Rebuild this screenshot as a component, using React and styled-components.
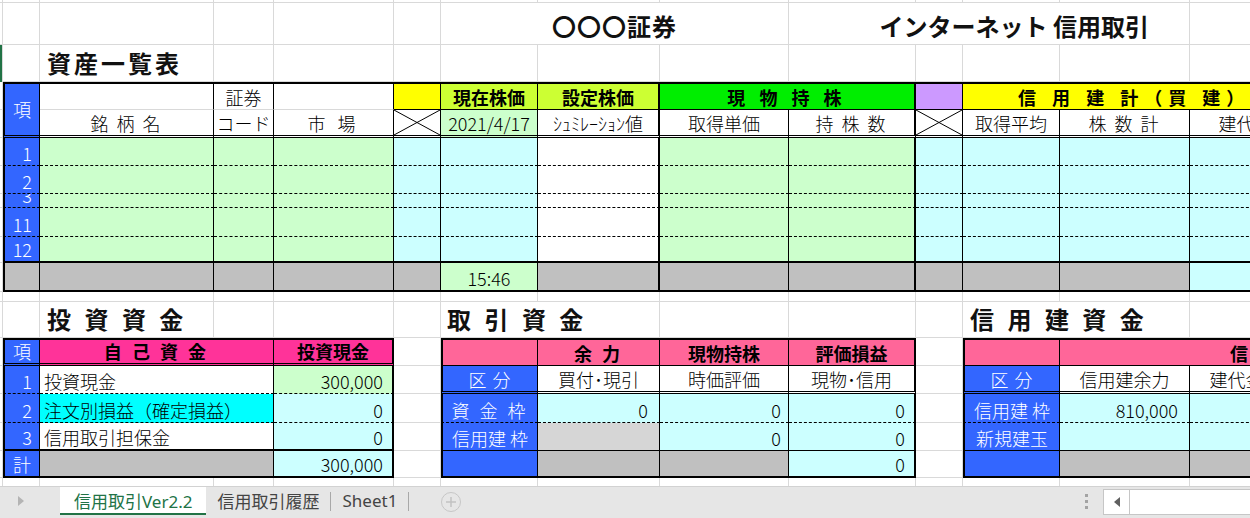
import React from "react";
import styled, { createGlobalStyle } from "styled-components";

const GlobalStyle = createGlobalStyle`
  html, body {
    margin: 0;
    padding: 0;
    background: #fff;
    overflow: hidden;
  }
  body {
    font-family: "Noto Sans CJK JP", "Noto Sans", sans-serif;
  }
`;

// excel fill colours
const BLUE = "#3366ff";
const YELLOW = "#ffff00";
const LIME = "#ccff33";
const GREEN = "#00ee00";
const PURPLE = "#cc99ff";
const LGREEN = "#ccffcc";
const CYAN = "#ccffff";
const AQUA = "#00ffff";
const GRAY = "#c0c0c0";
const LGRAY = "#d6d6d6";
const PINK = "#ff3399";
const ROSE = "#ff6699";
const W = "#fff";

const THIN = "1px solid #000";
const THICK = "2px solid #000";
const DASH = "1px dashed #000";
const DBL = "3px double #000";
const GRID = "1px solid #d9d9d9";

const COLS = [3, 37, 174, 60, 120, 47, 97, 122, 129, 127, 47, 97, 130, 130];
const ROWS = [3, 42, 37, 28, 28, 28, 28, 14, 29, 26, 29, 10, 36, 28, 28, 29, 28, 27, 20];

const JUSTIFY = { left: "flex-start", center: "center", right: "flex-end" };

const Page = styled.div`
  width: 1250px;
  height: 518px;
  display: flex;
  flex-direction: column;
  overflow: hidden;
`;

const Sheet = styled.div`
  flex: 1;
  overflow: hidden;
`;

const Grid = styled.div`
  display: grid;
  width: max-content;
  grid-template-columns: ${COLS.map((w) => w + "px").join(" ")};
  grid-template-rows: ${ROWS.map((h) => h + "px").join(" ")};
`;

const GridCell = styled.div`
  grid-row: ${(p) => p.$r + 1};
  grid-column: ${(p) => p.$c + 1};
  box-sizing: border-box;
  border-right: ${GRID};
  border-bottom: ${GRID};
`;

const SelBar = styled.div`
  grid-row: 3;
  grid-column: 1;
  width: 2px;
  background: #217346;
`;

const Cell = styled.div`
  grid-row: ${(p) => p.$r + 1} / span ${(p) => p.$rs || 1};
  grid-column: ${(p) => p.$c + 1} / span ${(p) => p.$cs || 1};
  box-sizing: border-box;
  min-width: 0;
  min-height: 0;
  display: flex;
  align-items: ${(p) => p.$va || "flex-end"};
  justify-content: ${(p) => JUSTIFY[p.$al || "center"]};
  padding: 0 ${(p) => p.$pr ?? 3}px ${(p) => p.$pb ?? 1}px ${(p) => p.$pl ?? 3}px;
  background: ${(p) => p.$bg || "#fff"};
  color: ${(p) => p.$fg || "#000"};
  font-size: 18px;
  line-height: 22px;
  font-weight: ${(p) => (p.$bold ? 700 : 300)};
  letter-spacing: ${(p) => p.$ls || 0}px;
  white-space: nowrap;
  overflow: hidden;
  border-top: ${(p) => p.$bt || "none"};
  border-right: ${(p) => p.$br || "none"};
  border-bottom: ${(p) => p.$bb || "none"};
  border-left: ${(p) => p.$bl || "none"};
`;

const TitleCell = styled(Cell)`
  font-size: 24px;
  line-height: 30px;
  font-weight: 700;
  color: #111;
`;

const CrossSvg = styled.svg`
  display: block;
  flex: 1 1 auto;
  width: 100%;
  height: 100%;
`;

const Cross = () => (
  <CrossSvg viewBox="0 0 100 100" preserveAspectRatio="none">
    <line x1="0" y1="0" x2="100" y2="100" stroke="#000" strokeWidth="1" vectorEffect="non-scaling-stroke" />
    <line x1="0" y1="100" x2="100" y2="0" stroke="#000" strokeWidth="1" vectorEffect="non-scaling-stroke" />
  </CrossSvg>
);

const renderCell = (d, key) => (
  <Cell
    key={key}
    $r={d.r}
    $c={d.c}
    $rs={d.rs}
    $cs={d.cs}
    $bg={d.bg}
    $fg={d.fg}
    $bold={d.b}
    $al={d.al}
    $va={d.x ? "stretch" : d.va}
    $pl={d.x ? 0 : d.pl}
    $pr={d.x ? 0 : d.pr}
    $pb={d.x ? 0 : d.pb}
    $ls={d.ls}
    $bt={d.bt}
    $br={d.br}
    $bb={d.bb}
    $bl={d.bl}
  >
    {d.x ? <Cross /> : d.t}
  </Cell>
);

// --- titles
const titles = [
  { r: 1, c: 6, cs: 3, t: "〇〇〇証券", ls: 1 },
  { r: 1, c: 9, cs: 4, t: "インターネット 信用取引", al: "right", pr: 40 },
  { r: 2, c: 2, t: "資産一覧表", al: "left", pl: 7, ls: 3 },
  { r: 12, c: 2, t: "投 資 資 金", al: "left", pl: 7, ls: 4 },
  { r: 12, c: 6, cs: 2, t: "取 引 資 金", al: "left", pl: 6, ls: 4 },
  { r: 12, c: 11, cs: 2, t: "信 用 建 資 金", al: "left", pl: 7, ls: 4 },
];

// --- 資産一覧表 header
const assetHeader = [
  { r: 3, c: 1, rs: 2, t: "項", bg: BLUE, fg: W, va: "center", bt: THICK, bl: THICK, br: THIN, bb: DBL },
  { r: 3, c: 2, bt: THICK, br: THIN, bb: GRID },
  { r: 4, c: 2, t: "銘 柄 名", br: THIN, bb: DBL, ls: 2 },
  { r: 3, c: 3, t: "証券", bt: THICK, br: THIN, bb: GRID },
  { r: 4, c: 3, t: "コード", br: THIN, bb: DBL },
  { r: 3, c: 4, bt: THICK, br: THIN, bb: GRID },
  { r: 4, c: 4, t: "市 場", br: THIN, bb: DBL, ls: 4 },
  { r: 3, c: 5, bg: YELLOW, bt: THICK, br: THIN, bb: THIN },
  { r: 4, c: 5, x: true, br: THIN, bb: DBL },
  { r: 3, c: 6, t: "現在株価", b: true, bg: LIME, bt: THICK, br: THIN, bb: THIN },
  { r: 4, c: 6, t: "2021/4/17", bg: LGREEN, br: THIN, bb: DBL, pl: 1, pr: 1 },
  { r: 3, c: 7, t: "設定株価", b: true, bg: LIME, bt: THICK, br: THICK, bb: THIN },
  { r: 4, c: 7, t: "ｼｭﾐﾚｰｼｮﾝ値", br: THICK, bb: DBL },
  { r: 3, c: 8, cs: 2, t: "現 物 持 株", b: true, bg: GREEN, bt: THICK, br: THICK, bb: THIN, ls: 5 },
  { r: 4, c: 8, t: "取得単価", br: THIN, bb: DBL },
  { r: 4, c: 9, t: "持 株 数", br: THICK, bb: DBL, ls: 2 },
  { r: 3, c: 10, bg: PURPLE, bt: THICK, br: THIN, bb: THIN },
  { r: 4, c: 10, x: true, br: THIN, bb: DBL },
  { r: 3, c: 11, cs: 3, t: "信 用 建 計（買 建）", b: true, bg: YELLOW, bt: THICK, bb: THIN, al: "left", pl: 55, ls: 6 },
  { r: 4, c: 11, t: "取得平均", br: THIN, bb: DBL },
  { r: 4, c: 12, t: "株 数 計", br: THIN, bb: DBL, ls: 2 },
  { r: 4, c: 13, t: "建代金計", br: THIN, bb: DBL },
];

const assetCols = [
  { c: 1, bg: BLUE, br: THIN, bl: THICK },
  { c: 2, bg: LGREEN, br: THIN },
  { c: 3, bg: LGREEN, br: THIN },
  { c: 4, bg: LGREEN, br: THIN },
  { c: 5, bg: CYAN, br: THIN },
  { c: 6, bg: CYAN, br: THIN },
  { c: 7, bg: W, br: THICK },
  { c: 8, bg: LGREEN, br: THIN },
  { c: 9, bg: LGREEN, br: THICK },
  { c: 10, bg: CYAN, br: THIN },
  { c: 11, bg: CYAN, br: THIN },
  { c: 12, bg: CYAN, br: THIN },
  { c: 13, bg: CYAN, br: THIN },
];

const assetRows = [
  { r: 5, n: "1", bb: DASH },
  { r: 6, n: "2", bb: DASH },
  { r: 7, n: "3", bb: DASH },
  { r: 8, n: "11", bb: DASH },
  { r: 9, n: "12", bb: THICK },
];

const assetBody = [
  ...assetRows.flatMap((row) =>
    assetCols.map((col) => ({
      r: row.r,
      c: col.c,
      bg: col.bg,
      br: col.br,
      bl: col.bl,
      bb: row.bb,
      ...(col.c === 1 ? { t: row.n, fg: W, al: "right", pr: 7 } : {}),
    }))
  ),
  ...assetCols.map((col) => ({
    r: 10,
    c: col.c,
    br: col.br,
    bl: col.bl,
    bb: THICK,
    bg: col.c === 6 ? LGREEN : col.c === 13 ? CYAN : GRAY,
    t: col.c === 6 ? "15:46" : undefined,
  })),
];

// --- 投資資金
const fundRows = [
  { r: 14, n: "1", label: "投資現金", lbg: W, v: "300,000", vbg: LGREEN, bb: DASH },
  { r: 15, n: "2", label: "注文別損益（確定損益）", lbg: AQUA, v: "0", vbg: CYAN, bb: DASH },
  { r: 16, n: "3", label: "信用取引担保金", lbg: W, v: "0", vbg: CYAN, bb: THICK },
];

const fund = [
  { r: 13, c: 1, t: "項", bg: BLUE, fg: W, bt: THICK, bl: THICK, br: THIN, bb: DBL },
  { r: 13, c: 2, cs: 2, t: "自 己 資 金", b: true, bg: PINK, bt: THICK, br: THIN, bb: DBL, ls: 3 },
  { r: 13, c: 4, t: "投資現金", b: true, bg: PINK, bt: THICK, br: THICK, bb: DBL },
  ...fundRows.flatMap((row) => [
    { r: row.r, c: 1, t: row.n, bg: BLUE, fg: W, al: "right", pr: 7, bl: THICK, br: THIN, bb: row.bb },
    { r: row.r, c: 2, cs: 2, t: row.label, bg: row.lbg, al: "left", pl: 4, br: THIN, bb: row.bb },
    { r: row.r, c: 4, t: row.v, bg: row.vbg, al: "right", pr: 9, br: THICK, bb: row.bb },
  ]),
  { r: 17, c: 1, t: "計", bg: BLUE, fg: W, bl: THICK, br: THIN, bb: THICK },
  { r: 17, c: 2, cs: 2, bg: GRAY, br: THIN, bb: THICK },
  { r: 17, c: 4, t: "300,000", bg: CYAN, al: "right", pr: 9, br: THICK, bb: THICK },
];

// --- 取引資金
const trade = [
  { r: 13, c: 6, bg: ROSE, bt: THICK, bl: THICK, br: THIN, bb: THIN },
  { r: 13, c: 7, t: "余 力", b: true, bg: ROSE, bt: THICK, br: THIN, bb: THIN, ls: 3 },
  { r: 13, c: 8, t: "現物持株", b: true, bg: ROSE, bt: THICK, br: THIN, bb: THIN },
  { r: 13, c: 9, t: "評価損益", b: true, bg: ROSE, bt: THICK, br: THICK, bb: THIN },
  { r: 14, c: 6, t: "区 分", bg: BLUE, fg: W, bl: THICK, br: THIN, bb: DBL, ls: 1 },
  { r: 14, c: 7, t: "買付･現引", br: THIN, bb: DBL },
  { r: 14, c: 8, t: "時価評価", br: THIN, bb: DBL },
  { r: 14, c: 9, t: "現物･信用", br: THICK, bb: DBL },
  { r: 15, c: 6, t: "資 金 枠", bg: BLUE, fg: W, bl: THICK, br: THIN, bb: DASH, ls: 3 },
  { r: 15, c: 7, t: "0", bg: CYAN, al: "right", pr: 11, br: THIN, bb: DASH },
  { r: 15, c: 8, t: "0", bg: CYAN, al: "right", pr: 7, br: THIN, bb: DASH },
  { r: 15, c: 9, t: "0", bg: CYAN, al: "right", pr: 9, br: THICK, bb: DASH },
  { r: 16, c: 6, t: "信用建 枠", bg: BLUE, fg: W, bl: THICK, br: THIN, bb: THIN },
  { r: 16, c: 7, bg: LGRAY, br: THIN, bb: THIN },
  { r: 16, c: 8, t: "0", bg: CYAN, al: "right", pr: 7, br: THIN, bb: THIN },
  { r: 16, c: 9, t: "0", bg: CYAN, al: "right", pr: 9, br: THICK, bb: THIN },
  { r: 17, c: 6, bg: BLUE, bl: THICK, br: THIN, bb: THICK },
  { r: 17, c: 7, bg: GRAY, br: THIN, bb: THICK },
  { r: 17, c: 8, bg: GRAY, br: THIN, bb: THICK },
  { r: 17, c: 9, t: "0", bg: CYAN, al: "right", pr: 9, br: THICK, bb: THICK },
];

// --- 信用建資金
const margin = [
  { r: 13, c: 11, bg: ROSE, bt: THICK, bl: THICK, br: THIN, bb: THIN },
  { r: 13, c: 12, cs: 2, t: "信 用 建 玉", b: true, bg: ROSE, bt: THICK, bb: THIN, al: "left", pl: 170, ls: 4 },
  { r: 14, c: 11, t: "区 分", bg: BLUE, fg: W, bl: THICK, br: THIN, bb: DBL, ls: 1 },
  { r: 14, c: 12, t: "信用建余力", br: THIN, bb: DBL },
  { r: 14, c: 13, t: "建代金合計", br: THIN, bb: DBL },
  { r: 15, c: 11, t: "信用建 枠", bg: BLUE, fg: W, bl: THICK, br: THIN, bb: DASH },
  { r: 15, c: 12, t: "810,000", bg: CYAN, al: "right", pr: 11, br: THIN, bb: DASH },
  { r: 15, c: 13, bg: CYAN, br: THIN, bb: DASH },
  { r: 16, c: 11, t: "新規建玉", bg: BLUE, fg: W, bl: THICK, br: THIN, bb: THIN },
  { r: 16, c: 12, bg: CYAN, br: THIN, bb: THIN },
  { r: 16, c: 13, bg: CYAN, br: THIN, bb: THIN },
  { r: 17, c: 11, bg: BLUE, bl: THICK, br: THIN, bb: THICK },
  { r: 17, c: 12, bg: GRAY, br: THIN, bb: THICK },
  { r: 17, c: 13, bg: GRAY, br: THIN, bb: THICK },
];

// --- sheet tabs
const TabBar = styled.div`
  flex: 0 0 32px;
  display: flex;
  align-items: flex-start;
  background: #e6e6e6;
  border-top: 1px solid #d2d2d2;
  box-sizing: border-box;
  font-family: "Noto Sans", "Noto Sans CJK JP", sans-serif;
  font-size: 17px;
`;

const NavArrow = styled.div`
  width: 60px;
  height: 28px;
  display: flex;
  align-items: center;
  padding-left: 18px;
  box-sizing: border-box;
`;

const Tab = styled.div`
  height: 28px;
  display: flex;
  align-items: center;
  box-sizing: border-box;
  padding: 0 ${(p) => (p.$active ? 14 : 11)}px;
  background: ${(p) => (p.$active ? "#fff" : "transparent")};
  color: ${(p) => (p.$active ? "#217346" : "#444")};
  border-bottom: 2px solid ${(p) => (p.$active ? "#217346" : "transparent")};
  white-space: nowrap;
`;

const TabSep = styled.div`
  width: 1px;
  height: 19px;
  margin-top: 5px;
  background: #a8a8a8;
`;

const AddButton = styled.div`
  width: 18px;
  height: 18px;
  margin: 5px 0 0 32px;
  border-radius: 50%;
  border: 1.5px solid #c6c6c6;
  display: flex;
  align-items: center;
  justify-content: center;
`;

const Spacer = styled.div`
  flex: 1;
`;

const Grip = styled.div`
  display: flex;
  flex-direction: column;
  gap: 3px;
  margin: 7px 15px 0 0;
  span {
    width: 3px;
    height: 3px;
    background: #a3a3a3;
  }
`;

const HScroll = styled.div`
  width: 147px;
  height: 26px;
  margin-top: 2px;
  background: #fff;
  border: 1px solid #c6c6c6;
  border-right: none;
  box-sizing: border-box;
  display: flex;
`;

const ScrollBtn = styled.div`
  width: 25px;
  border-right: 1px solid #c6c6c6;
  display: flex;
  align-items: center;
  justify-content: center;
`;

const App = () => {
  const base = [];
  ROWS.forEach((_, r) =>
    COLS.forEach((__, c) => base.push(<GridCell key={`g${r}-${c}`} $r={r} $c={c} />))
  );

  return (
    <Page>
      <GlobalStyle />
      <Sheet>
        <Grid>
          {base}
          <SelBar />
          {titles.map((d, i) => (
            <TitleCell
              key={`t${i}`}
              $r={d.r}
              $c={d.c}
              $cs={d.cs}
              $al={d.al}
              $pl={d.pl}
              $pr={d.pr}
              $pb={3}
              $ls={d.ls}
              $br={GRID}
              $bb={GRID}
            >
              {d.t}
            </TitleCell>
          ))}
          {assetHeader.map((d, i) => renderCell(d, `h${i}`))}
          {assetBody.map((d, i) => renderCell(d, `a${i}`))}
          {fund.map((d, i) => renderCell(d, `f${i}`))}
          {trade.map((d, i) => renderCell(d, `k${i}`))}
          {margin.map((d, i) => renderCell(d, `m${i}`))}
        </Grid>
      </Sheet>

      <TabBar>
        <NavArrow>
          <svg width="6" height="10" viewBox="0 0 6 10">
            <path d="M0 0 L6 5 L0 10 Z" fill="#b4b4b4" />
          </svg>
        </NavArrow>
        <Tab $active>信用取引Ver2.2</Tab>
        <Tab>信用取引履歴</Tab>
        <TabSep />
        <Tab>Sheet1</Tab>
        <TabSep />
        <AddButton>
          <svg width="10" height="10" viewBox="0 0 10 10">
            <path d="M5 0 V10 M0 5 H10" stroke="#c2c2c2" strokeWidth="1.5" />
          </svg>
        </AddButton>
        <Spacer />
        <Grip>
          <span />
          <span />
          <span />
        </Grip>
        <HScroll>
          <ScrollBtn>
            <svg width="6" height="10" viewBox="0 0 6 10">
              <path d="M6 0 L0 5 L6 10 Z" fill="#606060" />
            </svg>
          </ScrollBtn>
        </HScroll>
      </TabBar>
    </Page>
  );
};

export default App;
